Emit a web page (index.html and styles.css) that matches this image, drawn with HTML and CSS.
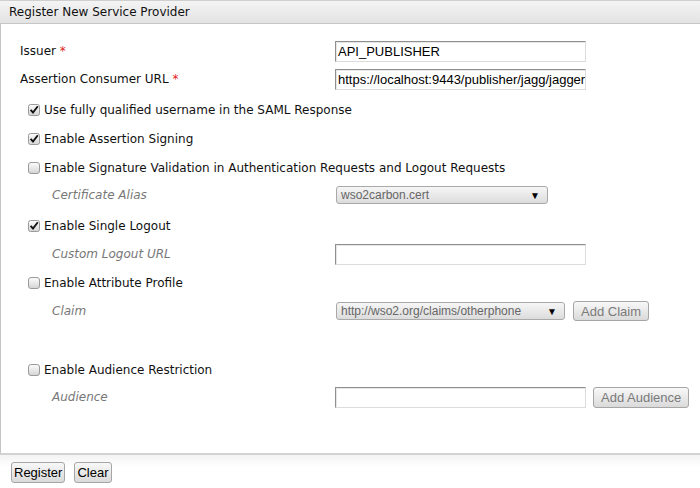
FILE: index.html
```html
<!DOCTYPE html>
<html>
<head>
<meta charset="utf-8">
<link rel="stylesheet" href="styles.css">
</head>
<body>
<div class="panel">
  <div class="panel-head">Register New Service Provider</div>
  <div class="panel-body">
    <div class="row field">
      <label class="lbl">Issuer <span class="req">*</span></label>
      <div class="input"><span>API_PUBLISHER</span></div>
    </div>
    <div class="row field g8">
      <label class="lbl">Assertion Consumer URL <span class="req">*</span></label>
      <div class="input"><span>https://localhost:9443/publisher/jagg/jaggery_acs.jag</span></div>
    </div>
    <div class="row check g11">
      <span class="cb on"><svg width="12" height="12" viewBox="0 0 12 12"><defs><linearGradient id="cbg" x1="0" y1="0" x2="0" y2="1"><stop offset="0" stop-color="#fdfdfd"/><stop offset="1" stop-color="#d4d4d4"/></linearGradient></defs><rect x="0.5" y="0.5" width="11" height="11" rx="2" fill="url(#cbg)" stroke="#9a9a9a"/><path d="M2.6 5.8 L5 8.6 L9.8 2.2" fill="none" stroke="#111" stroke-width="1.9"/></svg></span>
      <span class="ctext">Use fully qualified username in the SAML Response</span>
    </div>
    <div class="row check g9">
      <span class="cb on"><svg width="12" height="12" viewBox="0 0 12 12"><rect x="0.5" y="0.5" width="11" height="11" rx="2" fill="url(#cbg)" stroke="#9a9a9a"/><path d="M2.6 5.8 L5 8.6 L9.8 2.2" fill="none" stroke="#111" stroke-width="1.9"/></svg></span>
      <span class="ctext">Enable Assertion Signing</span>
    </div>
    <div class="row check g9">
      <span class="cb"><svg width="12" height="12" viewBox="0 0 12 12"><rect x="0.5" y="0.5" width="11" height="11" rx="2.5" fill="url(#cbg)" stroke="#9a9a9a"/></svg></span>
      <span class="ctext">Enable Signature Validation in Authentication Requests and Logout Requests</span>
    </div>
    <div class="row sub g7">
      <span class="slbl">Certificate Alias</span>
      <div class="select wide"><span>wso2carbon.cert</span><span class="arrow">&#9660;</span></div>
    </div>
    <div class="row check g11">
      <span class="cb on"><svg width="12" height="12" viewBox="0 0 12 12"><rect x="0.5" y="0.5" width="11" height="11" rx="2" fill="url(#cbg)" stroke="#9a9a9a"/><path d="M2.6 5.8 L5 8.6 L9.8 2.2" fill="none" stroke="#111" stroke-width="1.9"/></svg></span>
      <span class="ctext">Enable Single Logout</span>
    </div>
    <div class="row sub g8">
      <span class="slbl">Custom Logout URL</span>
      <div class="input"></div>
    </div>
    <div class="row check g9">
      <span class="cb"><svg width="12" height="12" viewBox="0 0 12 12"><rect x="0.5" y="0.5" width="11" height="11" rx="2.5" fill="url(#cbg)" stroke="#9a9a9a"/></svg></span>
      <span class="ctext">Enable Attribute Profile</span>
    </div>
    <div class="row sub g8">
      <span class="slbl">Claim</span>
      <div class="select claim"><span>http://wso2.org/claims/otherphone</span><span class="arrow">&#9660;</span></div>
      <button class="btn dim add-claim">Add Claim</button>
    </div>
    <div class="row check g39">
      <span class="cb"><svg width="12" height="12" viewBox="0 0 12 12"><rect x="0.5" y="0.5" width="11" height="11" rx="2.5" fill="url(#cbg)" stroke="#9a9a9a"/></svg></span>
      <span class="ctext">Enable Audience Restriction</span>
    </div>
    <div class="row sub g7">
      <span class="slbl">Audience</span>
      <div class="input"></div>
      <button class="btn dim add-aud">Add Audience</button>
    </div>
  </div>
  <div class="panel-foot">
    <button class="btn">Register</button>
    <button class="btn">Clear</button>
  </div>
</div>
</body>
</html>
```
FILE: styles.css
```css
html, body {
  margin: 0;
  padding: 0;
  background: #fff;
}
body {
  width: 700px;
  height: 488px;
  overflow: hidden;
  font-family: "DejaVu Sans", sans-serif;
  font-size: 12px;
  color: #111;
}
.panel {
  display: flex;
  flex-direction: column;
  height: 488px;
}
.panel-head {
  height: 22px;
  line-height: 22px;
  padding-left: 9px;
  border-top: 1px solid #cfcfcf;
  border-bottom: 1px solid #c6c6c6;
  background: linear-gradient(#f4f4f4, #e3e3e3);
  font-size: 12px;
  color: #111;
}
.panel-body {
  height: 429px;
  border-left: 1px solid #c4c4c4;
  padding-top: 17px;
  box-sizing: border-box;
}
.row {
  height: 20px;
  display: flex;
  align-items: center;
}
.g7 { margin-top: 7px; }
.g8 { margin-top: 8px; }
.g9 { margin-top: 9px; }
.g11 { margin-top: 11px; }
.g39 { margin-top: 39px; }
.field { padding-left: 19px; }
.lbl {
  width: 315px;
  flex: none;
}
.req { color: #e02020; }
.input {
  width: 247px;
  height: 19px;
  border: 1px solid;
  border-color: #8f8f8f #dcdcdc #dcdcdc #8f8f8f;
  box-shadow: inset 1px 1px 0 #e6e6e6;
  background: #fff;
  overflow: hidden;
  white-space: nowrap;
  display: flex;
  align-items: center;
  padding-left: 2px;
  box-sizing: content-box;
  font-family: "Liberation Sans", Arial, sans-serif;
  font-size: 13px;
  color: #000;
  flex: none;
}
.check { padding-left: 27px; }
.cb {
  width: 12px;
  height: 12px;
  display: block;
  flex: none;
}
.cb svg { display: block; }
.ctext { margin-left: 4px; }
.sub { padding-left: 51px; }
.slbl {
  width: 283px;
  flex: none;
  font-style: italic;
  color: #777;
}
.select {
  height: 16px;
  margin-left: 1px;
  border: 1px solid #a9a9a9;
  border-radius: 3px;
  background: linear-gradient(#f6f6f6, #dcdcdc);
  display: flex;
  align-items: center;
  justify-content: space-between;
  padding: 0 7px 0 4px;
  box-sizing: content-box;
  font-family: "Liberation Sans", Arial, sans-serif;
  font-size: 12px;
  color: #666;
  flex: none;
}
.select .arrow {
  font-size: 10px;
  color: #000;
}
.select.wide { width: 199px; }
.select.claim { width: 216px; }
.btn {
  font-family: "Liberation Sans", Arial, sans-serif;
  font-size: 13px;
  height: 21px;
  padding: 0 6px;
  border: 1px solid #a6a6a6;
  border-radius: 3px;
  background: linear-gradient(#f8f8f8, #dadada);
  color: #000;
  margin: 0;
  line-height: 19px;
}
.btn.dim { color: #7a7a7a; }
.add-claim { margin-left: 8px; height: 20px; padding: 0 7px; }
.add-aud { margin-left: 7px; padding: 0 7px; }
.panel-foot {
  flex: 1;
  border-top: 2px solid #d2d2d2;
  background: linear-gradient(#f3f3f3, #fff 12px);
  padding: 7px 0 0 11px;
  display: flex;
  gap: 9px;
  align-items: flex-start;
}
.panel-foot .btn {
  padding: 0 2px;
}
```
